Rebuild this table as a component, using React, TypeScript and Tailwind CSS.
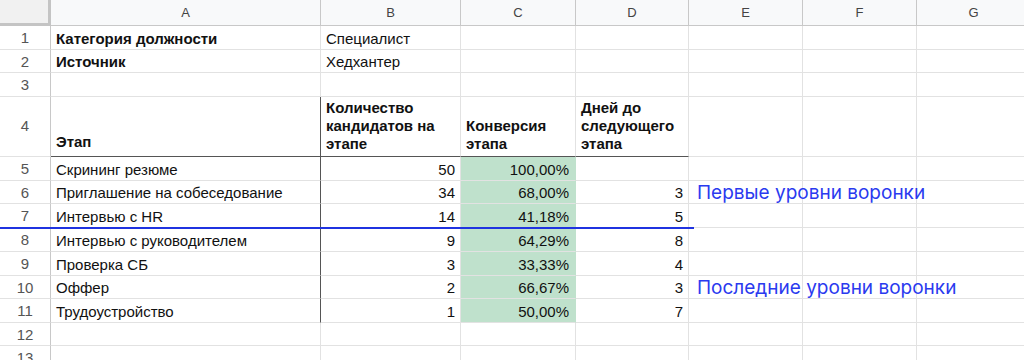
import React from "react";

type Row = {
  n: number;
  h: string;
  a?: string;
  b?: string;
  c?: string;
  d?: string;
  note?: string;
  bold?: boolean;
};

const rows: Row[] = [
  { n: 1, h: "h-[24px]", a: "Категория должности", b: "Специалист", bold: true },
  { n: 2, h: "h-[23px]", a: "Источник", b: "Хедхантер", bold: true },
  { n: 3, h: "h-[24px]" },
  { n: 5, h: "h-[24px]", a: "Скрининг резюме", b: "50", c: "100,00%" },
  { n: 6, h: "h-[23px]", a: "Приглашение на собеседование", b: "34", c: "68,00%", d: "3", note: "Первые уровни воронки" },
  { n: 7, h: "h-[24px]", a: "Интервью с HR", b: "14", c: "41,18%", d: "5" },
  { n: 8, h: "h-[24px]", a: "Интервью с руководителем", b: "9", c: "64,29%", d: "8" },
  { n: 9, h: "h-[24px]", a: "Проверка СБ", b: "3", c: "33,33%", d: "4" },
  { n: 10, h: "h-[23px]", a: "Оффер", b: "2", c: "66,67%", d: "3", note: "Последние уровни воронки" },
  { n: 11, h: "h-[24px]", a: "Трудоустройство", b: "1", c: "50,00%", d: "7" },
  { n: 12, h: "h-[23px]" },
  { n: 13, h: "h-[24px]" },
];

const cols = ["A", "B", "C", "D", "E", "F", "G"];
const widths = ["w-[270px]", "w-[140px]", "w-[115px]", "w-[113px]", "w-[114px]", "w-[114px]", "w-[114px]"];

const cell = "shrink-0 border-b border-r border-[#e2e2e2] px-[5px] flex items-center text-[15px] text-[#111]";

function DataRow({ r }: { r: Row }) {
  const body = r.n >= 5 && r.n <= 11;
  return (
    <div className={`flex ${r.h}`}>
      <div className={`${cell} w-[51px] justify-center pt-[2px] text-[12px] text-[#555] border-r-[#c8c8c8]`}>{r.n}</div>
      <div className={`${cell} ${widths[0]} pt-[3px] ${r.bold ? "font-bold" : ""} ${body ? "border-r-[#555]" : ""}`}>{r.a}</div>
      <div className={`${cell} ${widths[1]} pt-[3px] ${r.n < 5 ? "" : "justify-end"}`}>{r.b}</div>
      <div className={`${cell} ${widths[2]} justify-end pt-[3px] pr-[6px] ${body ? "bg-[#bfe1cc] border-r-[#bfe1cc]" : ""}`}>{r.c}</div>
      <div className={`${cell} ${widths[3]} justify-end pt-[3px]`}>{r.d}</div>
      <div className={`${cell} ${widths[4]} overflow-visible relative`}>
        {r.note && (
          <span className="whitespace-nowrap pl-[3px] pt-[3px] font-['Inter',sans-serif] text-[19px] text-[#2a3aef]">
            {r.note}
          </span>
        )}
      </div>
      <div className={`${cell} ${widths[5]}`} />
      <div className={`${cell} ${widths[6]}`} />
      <div className={`${cell} flex-1`} />
    </div>
  );
}

export default function App() {
  return (
    <div className="relative h-[360px] w-[1024px] overflow-hidden bg-white font-['Liberation_Sans',Arial,sans-serif]">
      {/* column letters */}
      <div className="flex h-[26px]">
        <div className="w-[51px] shrink-0 border-b-[3px] border-r-[3px] border-[#c4c4c4] bg-[#f1f1f1]" />
        {cols.map((c, i) => (
          <div
            key={c}
            className={`${widths[i]} shrink-0 flex items-center justify-center border-b border-r border-[#c8c8c8] bg-[#f8f9fa] text-[13px] text-[#444]`}
          >
            {c}
          </div>
        ))}
        <div className="flex-1 border-b border-[#c8c8c8] bg-[#f8f9fa]" />
      </div>

      {rows.slice(0, 3).map((r) => (
        <DataRow key={r.n} r={r} />
      ))}

      {/* header row 4 */}
      <div className="flex h-[60px]">
        <div className={`${cell} w-[51px] justify-center text-[12px] text-[#555] border-r-[#c8c8c8]`}>4</div>
        <div className={`${cell} ${widths[0]} items-end pb-[3px] font-bold border-r-[#555] border-b-[#555]`}>Этап</div>
        <div className={`${cell} ${widths[1]} items-end pb-[3px] font-bold leading-[18px] border-b-[#555]`}>
          Количество кандидатов на этапе
        </div>
        <div className={`${cell} ${widths[2]} items-end pb-[3px] font-bold leading-[18px] border-b-[#555]`}>
          Конверсия этапа
        </div>
        <div className={`${cell} ${widths[3]} items-end pb-[3px] font-bold leading-[18px] border-b-[#555]`}>
          Дней до следующего этапа
        </div>
        <div className={`${cell} ${widths[4]}`} />
        <div className={`${cell} ${widths[5]}`} />
        <div className={`${cell} ${widths[6]}`} />
        <div className={`${cell} flex-1`} />
      </div>

      {rows.slice(3).map((r) => (
        <DataRow key={r.n} r={r} />
      ))}

      {/* funnel separator drawn over the sheet */}
      <div className="absolute left-0 top-[227px] h-[2px] w-[694px] bg-[#1f33e0]" />
    </div>
  );
}
